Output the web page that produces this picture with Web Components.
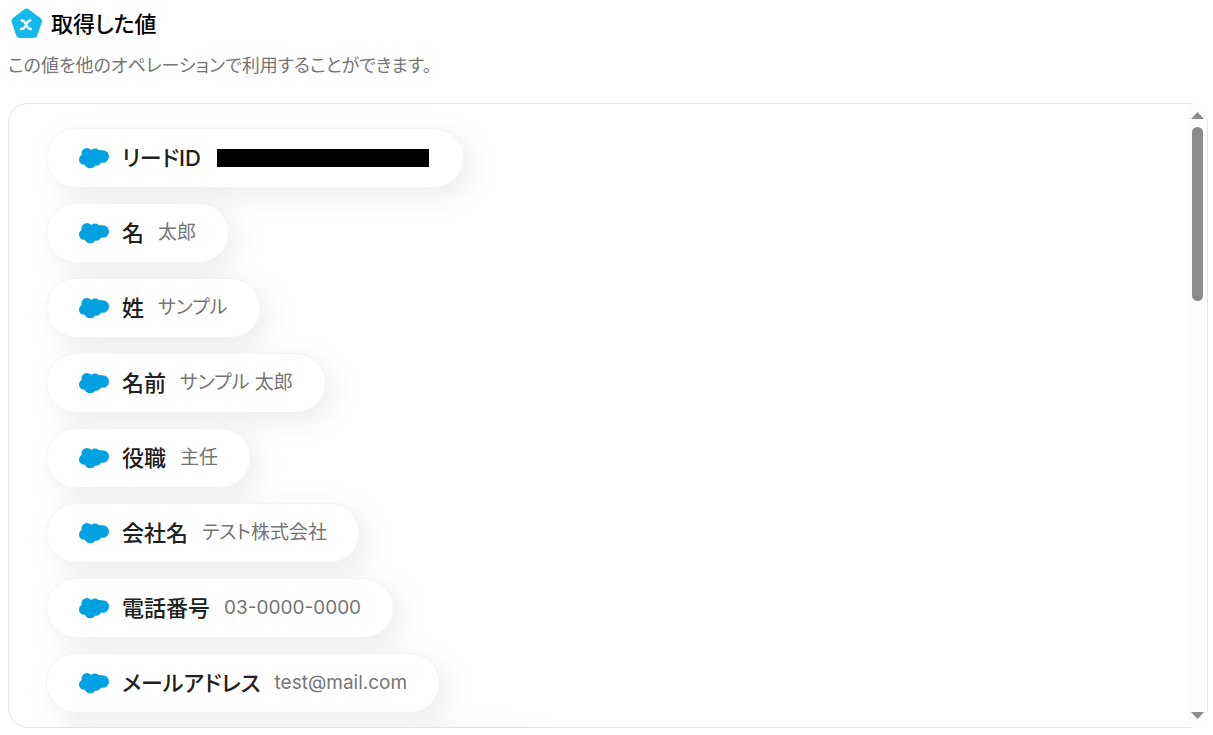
<!DOCTYPE html>
<html lang="ja">
<head>
<meta charset="utf-8">
<title>取得した値</title>
<style>
html, body { height: 100%; }
body {
  margin: 0;
  background: #fff;
  color: #000;
  font-family: Inter, "Noto Sans CJK JP", sans-serif;
  font-feature-settings: "palt";
}
</style>
</head>
<body>
<value-page>
  <span slot="title">取得した値</span>
  <span slot="note">この値を他のオペレーションで利用することができます。</span>
  <value-panel>
    <value-pill label="リードID"><redacted-bar></redacted-bar></value-pill>
    <value-pill label="名">太郎</value-pill>
    <value-pill label="姓">サンプル</value-pill>
    <value-pill label="名前">サンプル 太郎</value-pill>
    <value-pill label="役職">主任</value-pill>
    <value-pill label="会社名">テスト株式会社</value-pill>
    <value-pill label="電話番号">03-0000-0000</value-pill>
    <value-pill label="メールアドレス">test@mail.com</value-pill>
    <value-pill class="wide"></value-pill>
  </value-panel>
</value-page>

<script>
const define = (name, html, setup) =>
  customElements.define(
    name,
    class extends HTMLElement {
      connectedCallback() {
        if (this.shadowRoot) return;
        this.attachShadow({ mode: "open" }).innerHTML = html;
        if (setup) setup(this, this.shadowRoot);
      }
    }
  );

// pentagon with the x mark
define(
  "variable-icon",
  `<style>
    :host { display: block; flex: none; width: 32px; height: 32px; }
    svg { display: block; }
  </style>
  <svg width="32" height="32" viewBox="0 0 32 32" aria-hidden="true">
    <path d="M16.500 4 28.500 13 24 26.500H9.500L5 13Z" fill="#12b9ec" stroke="#12b9ec" stroke-width="7" stroke-linejoin="round"/>
    <g fill="none" stroke="#fff" stroke-width="2.300" stroke-linecap="round">
      <path d="M11.500 12.500C17 12 15 21.500 21 21"/>
      <path d="M20.500 12.500C15.500 12 17 21.500 11 21"/>
    </g>
  </svg>`
);

define(
  "cloud-icon",
  `<style>
    :host { display: block; flex: none; }
    svg { display: block; }
  </style>
  <svg width="30" height="22" viewBox="0 0 30 22" fill="#00a1e0" aria-hidden="true">
    <circle cx="8" cy="6.500" r="5.500"/>
    <circle cx="16" cy="6.500" r="5"/>
    <circle cx="20" cy="8" r="5"/>
    <circle cx="23.700" cy="9.500" r="6.300"/>
    <circle cx="5.300" cy="12.500" r="5.300"/>
    <circle cx="11.200" cy="15.700" r="5.600"/>
    <circle cx="17" cy="13.500" r="5.300"/>
    <path d="M6 7H22V14H6Z"/>
  </svg>`
);

define(
  "redacted-bar",
  `<style>
    :host { display: block; width: 212px; height: 18px; margin: 0 2px; background: #000; }
  </style>`
);

define(
  "value-pill",
  `<style>
    :host {
      display: flex;
      align-items: center;
      flex: none;
      box-sizing: border-box;
      height: 60px;
      padding: 0 32px;
      border: 1px solid #f3f3f3;
      border-radius: 30px;
      background: #fff;
      box-shadow: 8px 8px 32px rgba(0, 0, 0, .08);
      white-space: nowrap;
    }
    :host(.wide) { width: 500px; }
    dl { display: flex; align-items: center; gap: 14px; margin: 0 0 0 13px; }
    dt { color: #212121; font-size: 22px; font-weight: 500; line-height: 32px; }
    dd { margin: 0; color: #757575; font-size: 19px; line-height: 32px; }
  </style>
  <cloud-icon></cloud-icon>
  <dl><dt></dt><dd><slot></slot></dd></dl>`,
  (host, root) => {
    root.querySelector("dt").textContent = host.getAttribute("label") || "";
  }
);

define(
  "scroll-rail",
  `<style>
    :host { display: flex; flex-direction: column; flex: none; width: 19px; background: #fcfcfc; }
    button {
      display: grid;
      place-items: center;
      height: 23px;
      padding: 0;
      border: 0;
      background: none;
    }
    .track { flex: 1; }
    .thumb { width: 11px; height: 174px; margin: 0 auto; border-radius: 6px; background: #8b8b8b; }
  </style>
  <button aria-label="上へスクロール"><svg width="13" height="7"><path d="M0 7 6.500 0 13 7Z" fill="#8b8b8b"/></svg></button>
  <div class="track"><div class="thumb"></div></div>
  <button aria-label="下へスクロール"><svg width="13" height="7"><path d="M0 0 6.500 7 13 0Z" fill="#8b8b8b"/></svg></button>`,
  (host, root) => {
    root.querySelectorAll("button").forEach((button, i) => {
      button.onclick = () =>
        host.dispatchEvent(new CustomEvent("step", { detail: i ? 75 : -75 }));
    });
  }
);

define(
  "value-panel",
  `<style>
    :host {
      display: flex;
      flex: 1;
      min-height: 0;
      border: 1px solid #e5e5e5;
      border-radius: 20px;
    }
    .list {
      display: flex;
      flex: 1;
      flex-direction: column;
      align-items: flex-start;
      gap: 15px;
      min-width: 0;
      padding: 24px 37px;
      overflow-y: auto;
      scrollbar-width: none;
      border-radius: 19px 0 0 19px;
    }
  </style>
  <div class="list"><slot></slot></div>
  <scroll-rail></scroll-rail>`,
  (host, root) => {
    root.querySelector("scroll-rail").addEventListener("step", (e) => {
      root.querySelector(".list").scrollTop += e.detail;
    });
  }
);

define(
  "value-page",
  `<style>
    :host {
      display: flex;
      flex-direction: column;
      box-sizing: border-box;
      height: 100%;
      padding: 8px 5px 7px 8px;
    }
    header { display: flex; align-items: center; gap: 9px; padding-left: 2px; }
    h1 { margin: 0; font-size: 22px; font-weight: 500; line-height: 32px; }
    p { margin: 12px 0 24px; color: #757575; font-size: 18px; line-height: 27px; }
  </style>
  <header><variable-icon></variable-icon><h1><slot name="title"></slot></h1></header>
  <p><slot name="note"></slot></p>
  <slot></slot>`
);
</script>
</body>
</html>
